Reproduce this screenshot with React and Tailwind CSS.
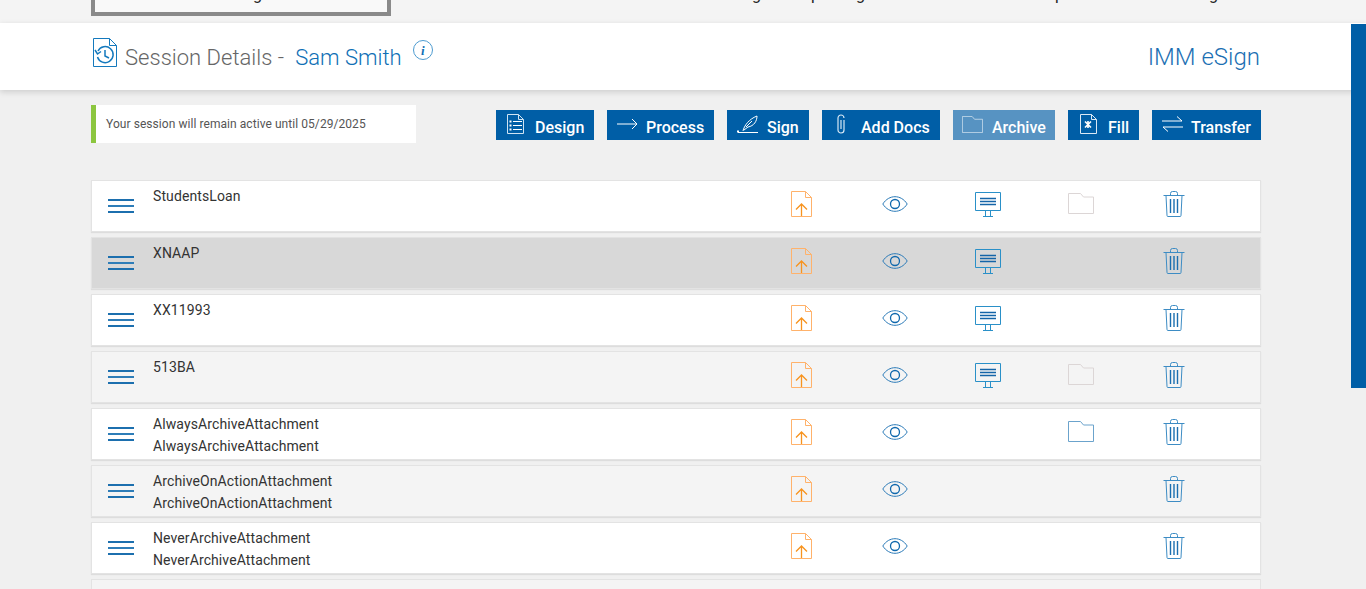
const rows = [
  { id: 1, lines: ["StudentsLoan"], screen: true, folder: "faded", bg: "bg-white" },
  { id: 2, lines: ["XNAAP"], screen: true, bg: "bg-[#d8d8d8]" },
  { id: 3, lines: ["XX11993"], screen: true, bg: "bg-white" },
  { id: 4, lines: ["513BA"], screen: true, folder: "faded", bg: "bg-[#f4f4f4]" },
  { id: 5, lines: ["AlwaysArchiveAttachment", "AlwaysArchiveAttachment"], folder: "full", bg: "bg-white" },
  { id: 6, lines: ["ArchiveOnActionAttachment", "ArchiveOnActionAttachment"], bg: "bg-[#f4f4f4]" },
  { id: 7, lines: ["NeverArchiveAttachment", "NeverArchiveAttachment"], bg: "bg-white" },
];

function DesignIcon() {
  return (
    <svg width="17" height="20" viewBox="0 0 17 20" fill="none" stroke="#cfe3f2" strokeWidth="1">
      <path d="M.5.5h11l5 5v14H.5z" />
      <path d="M11.500.5v5h5" />
      <path d="M6 7.500h9M6 11.500h9M6 15.500h9" stroke="#fff" />
      <path d="M2.500 7.500h2M2.500 11.500h2M2.500 15.500h2" stroke="#fff" strokeWidth="2" />
    </svg>
  );
}

function ArrowIcon() {
  return (
    <svg width="21" height="12" viewBox="0 0 21 12" fill="none" stroke="#fff" strokeWidth="1">
      <path d="M0 6h20M15 1l5 5-5 5" />
    </svg>
  );
}

function SignIcon() {
  return (
    <svg width="21" height="18" viewBox="0 0 21 18" fill="none" stroke="#fff" strokeWidth="1">
      <path d="M1 17.500h20" />
      <path d="M6 16c1-5 6-12 14-15 0 5-3 10-9 11l-4 3" />
      <path d="M9 12l6-6" />
      <path d="M0 16.500h2" strokeWidth="2" />
    </svg>
  );
}

function ClipIcon() {
  return (
    <svg width="9" height="20" viewBox="0 0 9 20" fill="none" stroke="#d5e8f5" strokeWidth="1.200">
      <path d="M7 6v10a3 3 0 0 1-6 0V4a3 3 0 0 1 6 0" />
      <path d="M4 6v9" />
    </svg>
  );
}

function FolderIcon({ stroke = "#fff", width = 26, height = 21 }) {
  return (
    <svg width={width} height={height} viewBox="0 0 26 21" fill="none" stroke={stroke} strokeWidth="1">
      <path d="M.5 20.500V.5h12l3 3.500h10v16.500z" />
    </svg>
  );
}

function FillIcon() {
  return (
    <svg width="17" height="20" viewBox="0 0 17 20" fill="none" stroke="#dbe9f5" strokeWidth="1">
      <path d="M.5.5h11l5 5v14H.5z" />
      <path d="M11.500.5v5h5" />
      <path d="M5 7.500l6 6M11 7.500l-6 6M8 7v7" stroke="#fff" strokeWidth="1.600" />
    </svg>
  );
}

function TransferIcon() {
  return (
    <svg width="21" height="16" viewBox="0 0 21 16" fill="none" stroke="#fff" strokeWidth="1">
      <path d="M0 5h20M15 .5l5 4.500M1 11h20M6 15.500l-5-4.500" />
    </svg>
  );
}

function UploadIcon() {
  return (
    <svg width="21" height="26" viewBox="0 0 21 26" fill="none" stroke="#ffb26b" strokeWidth="1">
      <path d="M.5.5h14l6 6v19H.5z" />
      <path d="M14.500.5v6h6" />
      <path d="M10.500 25V13M5 18.500l5.500-5.500 5.500 5.500" stroke="#f7931e" strokeWidth="1.300" />
    </svg>
  );
}

function EyeIcon() {
  return (
    <svg width="26" height="16" viewBox="0 0 26 16" fill="none" stroke="#2a7ab8" strokeWidth="1">
      <path d="M.8 8C4 3 8.500.7 13 .7S22 3 25.200 8C22 13 17.500 15.300 13 15.300S4 13 .8 8z" />
      <circle cx="13" cy="8" r="4.500" stroke="#0f68ad" strokeWidth="1.300" />
    </svg>
  );
}

function ScreenIcon() {
  return (
    <svg width="26" height="25" viewBox="0 0 26 25" fill="none" stroke="#2a90c8" strokeWidth="1">
      <path d="M.5.5h25v18H.5z" />
      <path d="M5 6.500h16M5 9.500h16M5 12.500h16" stroke="#1565a8" strokeWidth="1.400" />
      <path d="M10.500 19v5M15.500 19v5M8 24.500h10" />
    </svg>
  );
}

function TrashIcon() {
  return (
    <svg width="22" height="26" viewBox="0 0 22 26" fill="none" stroke="#3d8cc4" strokeWidth="1">
      <path d="M.5 4.500h21M7.500 4.500v-2a2 2 0 0 1 2-2h3a2 2 0 0 1 2 2v2" />
      <path d="M3 4.500l1 20a1 1 0 0 0 1 1h12a1 1 0 0 0 1-1l1-20" />
      <path d="M7.500 8v14M11 8v14M14.500 8v14" stroke="#1c6fb0" strokeWidth="1.400" />
    </svg>
  );
}

function Button({ icon, label, pad, width, labelPad = "", faded }) {
  return (
    <button className={`flex h-[30px] items-center text-[16px] font-medium text-white ${width} ${faded ? "bg-[#5793c2]" : "bg-[#005ea6]"}`}>
      <span className={`-mt-[2px] flex w-[39px] shrink-0 ${pad}`}>{icon}</span>
      <span className={`mt-[6px] leading-[24px] ${labelPad}`}>{label}</span>
    </button>
  );
}

function Row({ row }) {
  return (
    <div className={`flex h-[52px] border border-[#e3e3e3] shadow-[0_1px_1px_rgba(0,0,0,0.08)] ${row.bg}`}>
      <div className="w-[61px] shrink-0 pl-[16px] pt-[18px]">
        <div className="flex w-[26px] flex-col gap-[4px]">
          <div className="h-[2px] bg-[#1c6fae]" />
          <div className="h-[2px] bg-[#2e7db8]" />
          <div className="h-[2px] bg-[#1c6fae]" />
        </div>
      </div>
      <div className="w-[638px] shrink-0 pt-[4px] text-[14px] leading-[22px] tracking-[0.1px] text-[#333]">
        {row.lines.map((line, i) => <div key={i}>{line}</div>)}
      </div>
      <div className="w-[91px] shrink-0 pt-[10px]"><UploadIcon /></div>
      <div className="w-[93px] shrink-0 pt-[15px]"><EyeIcon /></div>
      <div className="w-[93px] shrink-0 pt-[11px]">{row.screen && <ScreenIcon />}</div>
      <div className="w-[95px] shrink-0 pt-[12px]">
        {row.folder && <FolderIcon stroke={row.folder === "full" ? "#6ba3cc" : "#dcd6d6"} />}
      </div>
      <div className="pt-[10px]"><TrashIcon /></div>
    </div>
  );
}

export default function App() {
  return (
    <div className="relative min-h-[589px] overflow-hidden bg-[#f0f0f0] font-['Roboto',sans-serif]">
      {/* page is scrolled: only the descenders of the nav row show */}
      <div className="flex h-[23px] items-start overflow-hidden bg-[#f4f4f4] pl-[91px] text-[16px] leading-[16px] text-[#222]">
        <div className="h-[16px] w-[300px] overflow-hidden border-x-4 border-b-4 border-[#8a8a8a] bg-[#f9f9f9] pl-[158px]">
          <div className="-mt-[13px]">g</div>
        </div>
        <div className="-mt-[13px] ml-[361px]">g</div>
        <div className="-mt-[13px] ml-[50px]">p</div>
        <div className="-mt-[13px] ml-[36px]">g</div>
        <div className="-mt-[13px] ml-[190px]">p</div>
        <div className="-mt-[13px] ml-[145px]">g</div>
      </div>
      <div className="relative z-10 flex h-[67px] items-start justify-between bg-white pl-[93px] pr-[106px] shadow-[0_2px_6px_rgba(0,0,0,0.15)]">
        <div className="flex">
          <svg className="mt-[15px]" width="24" height="29" viewBox="0 0 24 29" fill="none" stroke="#1479bd" strokeWidth="1">
            <path d="M.5.5h16l7 7v21H.5z" />
            <path d="M16.500.5v7h7" />
            <path d="M5 13a8 8 0 1 1-.5 6" strokeWidth="1.500" />
            <path d="M12 12v6l4 2M2 12l2.500 4 3.500-2.500" strokeWidth="1.500" />
          </svg>
          <div className="ml-[8px] mt-[20px] text-[22px] font-light leading-[30px] tracking-[0.02px] text-[#666]">
            Session Details -
            <span className="ml-[11px] text-[#0f6fb5]">Sam Smith</span>
          </div>
          <div className="ml-[11px] mt-[17px] flex h-[20px] w-[20px] items-center justify-center rounded-full border border-[#4d9bd0] font-['Liberation_Serif',serif] text-[13px] font-bold italic leading-none text-[#0f6fb5]">
            i
          </div>
        </div>
        <div className="mt-[19px] text-[24px] font-light leading-[30px] text-[#1b6fb3]">IMM eSign</div>
      </div>
      <div className="absolute right-0 top-[24px] z-20 h-[364px] w-[15px] bg-[#005ea6]" />

      <div className="w-[1261px] pl-[91px]">
        <div className="mt-[15px] flex items-start justify-between">
          <div className="flex h-[38px] w-[325px] items-center border-l-[5px] border-[#8cc63f] bg-white pb-[1px] pl-[10px] text-[12px] tracking-[0.06px] text-[#555]">
            Your session will remain active until 05/29/2025
          </div>
          <div className="mt-[5px] flex gap-[13px]">
            <Button icon={<DesignIcon />} label="Design" width="w-[98px]" pad="pl-[11px]" />
            <Button icon={<ArrowIcon />} label="Process" width="w-[107px]" pad="pl-[10px]" />
            <Button icon={<SignIcon />} label="Sign" width="w-[82px]" pad="pl-[10px]" labelPad="pl-[1px]" />
            <Button icon={<ClipIcon />} label="Add Docs" width="w-[118px]" pad="pl-[15px]" />
            <Button icon={<FolderIcon stroke="#cfe0ee" width={21} height={17} />} label="Archive" width="w-[102px]" pad="pl-[9px]" faded />
            <Button icon={<FillIcon />} label="Fill" width="w-[71px]" pad="pl-[12px]" labelPad="pl-[1px]" />
            <Button icon={<TransferIcon />} label="Transfer" width="w-[109px]" pad="pl-[10px]" />
          </div>
        </div>
        <div className="mt-[37px] flex flex-col gap-[5px]">
          {rows.map((row) => <Row key={row.id} row={row} />)}
          <div className="h-[52px] border border-[#e3e3e3] bg-[#f4f4f4]" />
        </div>
      </div>
    </div>
  );
}
